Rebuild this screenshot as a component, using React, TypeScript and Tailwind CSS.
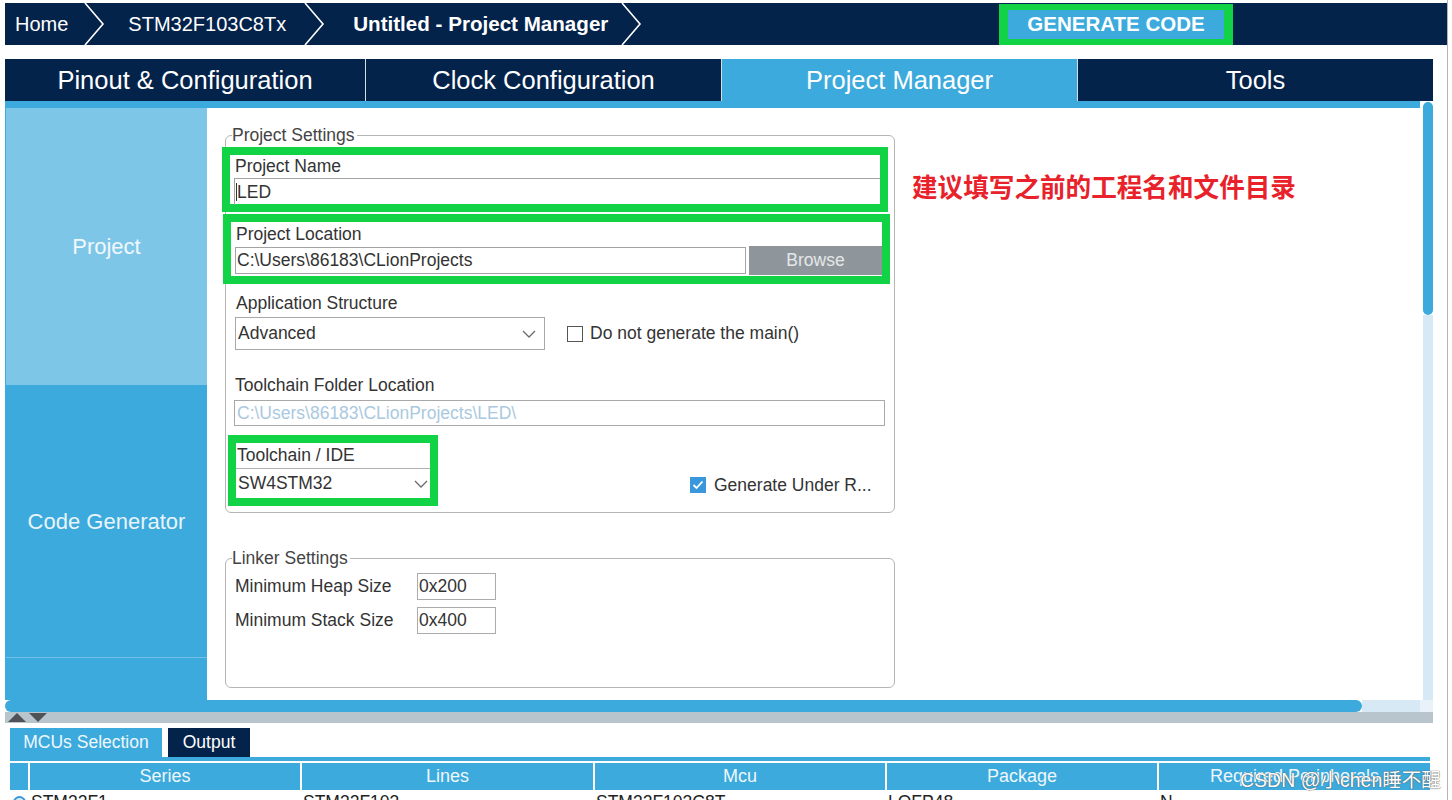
import React from "react";

function Crumb() {
  return (
    <svg width="22" height="42" viewBox="0 0 22 42" className="shrink-0">
      <polyline points="2,0 20,21 2,42" fill="none" stroke="#ffffff" strokeWidth="1.6" />
    </svg>
  );
}

function DownArrow() {
  return (
    <svg width="14" height="8" viewBox="0 0 14 8" className="shrink-0">
      <polyline points="1,1 7,7 13,1" fill="none" stroke="#6b6b6b" strokeWidth="1.3" />
    </svg>
  );
}

function CheckBox({ checked }: { checked?: boolean }) {
  if (checked) {
    return (
      <div className="w-[16px] h-[16px] bg-[#3a97db] flex items-center justify-center shrink-0">
        <svg width="12" height="10" viewBox="0 0 12 10">
          <polyline points="1.5,5 4.5,8 10.5,1.5" fill="none" stroke="#ffffff" strokeWidth="1.8" />
        </svg>
      </div>
    );
  }
  return <div className="w-[16px] h-[16px] border-[1.5px] border-[#555] bg-white shrink-0" />;
}

const tabs = [
  { name: "Pinout & Configuration", w: "w-[360px]", active: false },
  { name: "Clock Configuration", w: "w-[356px] border-l border-[#d5dde6]", active: false },
  { name: "Project Manager", w: "w-[356px] border-l border-[#d5dde6]", active: true },
  { name: "Tools", w: "w-[356px] border-l border-[#d5dde6]", active: false },
];

const columns = [
  { name: "", w: "w-[18px]", val: "" },
  { name: "Series", w: "w-[270px]", val: "STM32F1" },
  { name: "Lines", w: "w-[291px]", val: "STM32F103" },
  { name: "Mcu", w: "w-[290px]", val: "STM32F103C8T" },
  { name: "Package", w: "w-[270px]", val: "LQFP48" },
  { name: "Required Peripherals", w: "w-[271px]", val: "N" },
];

export default function App() {
  return (
    <div className="relative w-[1452px] h-[800px] overflow-hidden bg-white font-['Liberation_Sans','Noto_Sans_CJK_SC',Arial,sans-serif] text-[#333]">
      <div className="w-[1448px] h-full border-r border-[#b4b4b4] flex flex-col">
        {/* breadcrumb bar */}
        <div className="mt-[3px] ml-[5px] w-[1442px] h-[42px] bg-[#04234b] flex items-center text-white text-[20px] shrink-0">
          <span className="pl-[10px]">Home</span>
          <span className="ml-[15px]"><Crumb /></span>
          <span className="ml-[23px]">STM32F103C8Tx</span>
          <span className="ml-[17px]"><Crumb /></span>
          <span className="ml-[28px] font-bold text-[20.6px]">Untitled - Project Manager</span>
          <span className="ml-[12px]"><Crumb /></span>
          <div className="ml-auto mr-[214px] h-[41px] w-[234px] border-x-[9px] border-y-[6px] border-[#12d345] bg-[#3caadc] flex items-center justify-center font-bold text-[20.5px] text-white">
            GENERATE CODE
          </div>
        </div>

        {/* main tabs */}
        <div className="mt-[14px] ml-[5px] w-[1428px] h-[42px] flex shrink-0">
          {tabs.map((t) => (
            <div
              key={t.name}
              className={`${t.w} h-full flex items-center justify-center text-[25.5px] text-white ${t.active ? "bg-[#3caadc]" : "bg-[#04234b]"}`}
            >
              {t.name}
            </div>
          ))}
        </div>

        {/* body */}
        <div className="ml-[5px] w-[1428px] h-[599px] flex shrink-0">
          <div className="w-[1415px] flex flex-col">
            <div className="h-[7px] bg-[#3caadc]" />
            <div className="flex-1 flex">
              <div className="w-[202px] flex flex-col bg-[#3caadc] border-l border-[#3caadc]">
                <div className="h-[277px] bg-[#7ec6e8] flex items-center justify-center text-[22px] text-[#f0f8fc]">
                  Project
                </div>
                <div className="h-[272px] flex items-center justify-center text-[22px] text-[#e8f4fb]">
                  Code Generator
                </div>
                <div className="flex-1 border-t border-[#72c2e8]" />
              </div>

              <div className="flex-1 bg-white pl-[18px] pt-[17px] flex items-start">
                <div className="w-[670px] flex flex-col text-[17.5px]">
                  <fieldset className="border border-[#b5b5b5] rounded-[6px] w-[670px] pb-[6px]">
                    <legend className="ml-[6px] pr-[2px] leading-[20px] text-[#444]">Project Settings</legend>

                    <div className="mt-[2px] -ml-[4px] w-[666px] h-[65px] border-[8px] border-[#12d345] flex flex-col">
                      <div className="h-[23px] leading-[23px] pl-[5px]">Project Name</div>
                      <div className="ml-[4px] flex-1 border-l border-t border-[#a3a3a3] pl-[1px] flex items-center">
                        <span className="w-px h-[18px] bg-[#333]" />
                        <span>LED</span>
                      </div>
                    </div>

                    <div className="mt-[2px] -ml-[3px] w-[667px] h-[70px] border-[8px] border-[#12d345] flex flex-col">
                      <div className="h-[24px] leading-[24px] pl-[5px]">Project Location</div>
                      <div className="flex-1 flex items-start">
                        <div className="ml-[4px] mt-[1px] w-[511px] h-[27px] border border-[#a3a3a3] flex items-center pl-[1px]">
                          C:\Users\86183\CLionProjects
                        </div>
                        <div className="ml-[3px] flex-1 h-[29px] bg-[#8f969b] flex items-center justify-center text-[#e4e7e9]">
                          Browse
                        </div>
                      </div>
                    </div>

                    <div className="mt-[9px] ml-[10px] leading-[20px]">Application Structure</div>
                    <div className="mt-[4px] ml-[9px] flex items-center">
                      <div className="w-[310px] h-[33px] border-[1.5px] border-[#a8a8a8] flex items-center justify-between pl-[2px] pr-[8px]">
                        <span>Advanced</span>
                        <DownArrow />
                      </div>
                      <div className="ml-[22px] flex items-center gap-[7px]">
                        <CheckBox />
                        <span>Do not generate the main()</span>
                      </div>
                    </div>

                    <div className="mt-[25px] ml-[9px] leading-[20px]">Toolchain Folder Location</div>
                    <div className="mt-[5px] ml-[8px] w-[651px] h-[26px] border border-[#a8a8a8] flex items-center pl-[2px] text-[#aac9e0]">
                      C:\Users\86183\CLionProjects\LED\
                    </div>

                    <div className="mt-[9px] ml-[2px] flex">
                      <div className="w-[210px] h-[71px] border-[8px] border-[#12d345] flex flex-col">
                        <div className="h-[25px] leading-[25px] pl-[1px]">Toolchain / IDE</div>
                        <div className="flex-1 border-t border-[#b0b0b0] flex items-center justify-between pl-[2px] pr-[2px]">
                          <span>SW4STM32</span>
                          <DownArrow />
                        </div>
                      </div>
                      <div className="ml-[252px] self-end mb-[11px] h-[20px] flex items-center gap-[8px]">
                        <CheckBox checked />
                        <span>Generate Under R...</span>
                      </div>
                    </div>
                  </fieldset>

                  <fieldset className="mt-[35px] border border-[#b5b5b5] rounded-[6px] w-[670px] pb-[53px]">
                    <legend className="ml-[6px] pr-[2px] leading-[20px] text-[#444]">Linker Settings</legend>
                    <div className="mt-[5px] ml-[9px] flex items-center">
                      <span className="w-[182px]">Minimum Heap Size</span>
                      <div className="w-[79px] h-[27px] border border-[#ababab] flex items-center pl-[1px]">0x200</div>
                    </div>
                    <div className="mt-[7px] ml-[9px] flex items-center">
                      <span className="w-[182px]">Minimum Stack Size</span>
                      <div className="w-[79px] h-[27px] border border-[#ababab] flex items-center pl-[1px]">0x400</div>
                    </div>
                  </fieldset>
                </div>

                <div className="ml-[17px] mt-[45px] text-[25.6px] leading-[32px] font-bold text-[#e8212b] font-['Noto_Sans_CJK_SC',sans-serif]">
                  建议填写之前的工程名和文件目录
                </div>
              </div>
            </div>
          </div>

          {/* vertical scrollbar */}
          <div className="w-[13px] flex flex-col bg-white">
            <div className="ml-[3px] mt-[1px] w-[10px] h-[213px] rounded-full bg-[#3caadc]" />
            <div className="ml-[3px] w-[10px] flex-1 bg-[#d8e9f6]" />
          </div>
        </div>

        {/* horizontal scrollbar */}
        <div className="ml-[5px] w-[1428px] h-[12px] flex shrink-0">
          <div className="w-[1357px] h-full rounded-full bg-[#3caadc]" />
          <div className="w-[58px] h-full bg-[#d8e9f6]" />
          <div className="w-[13px] h-full bg-[#e9f2f9]" />
        </div>

        {/* splitter */}
        <div className="ml-[5px] w-[1428px] h-[11px] bg-[#b9c5cc] flex items-center pl-[3px] gap-[3px] shrink-0">
          <svg width="18" height="9" viewBox="0 0 18 9">
            <polygon points="0,9 9,0 18,9" fill="#4f5357" />
          </svg>
          <svg width="18" height="9" viewBox="0 0 18 9">
            <polygon points="0,0 18,0 9,9" fill="#4f5357" />
          </svg>
        </div>

        {/* bottom tabs */}
        <div className="mt-[5px] ml-[10px] flex h-[29px] shrink-0 text-[17.5px]">
          <div className="w-[152px] h-full bg-[#3caadc] flex items-center justify-center text-[#eef7fc]">MCUs Selection</div>
          <div className="ml-[6px] w-[82px] h-full bg-[#04234b] flex items-center justify-center text-white">Output</div>
        </div>
        <div className="ml-[10px] w-[1420px] h-[4px] bg-[#3caadc] shrink-0" />

        <div className="mt-[2px] ml-[10px] w-[1420px] h-[27px] flex gap-[2px] shrink-0 text-[18px]">
          {columns.map((c, i) => (
            <div key={i} className={`${c.w} h-full bg-[#3caadc] flex items-center justify-center text-[#eef7fc]`}>
              {c.name}
            </div>
          ))}
        </div>
        <div className="ml-[10px] w-[1420px] h-[24px] flex gap-[2px] shrink-0 text-[17.5px] text-[#222]">
          {columns.map((c, i) => (
            <div key={i} className={`${c.w} h-full flex items-center pl-[1px]`}>
              {i === 0 ? <span className="ml-[2px] w-[13px] h-[13px] rounded-full border-2 border-[#3a97db] bg-[#d8ecf8]" /> : c.val}
            </div>
          ))}
        </div>
      </div>

      <div className="absolute left-[1240px] top-[766px] text-[19.5px] text-white [text-shadow:0_0_1px_#555,0_0_1px_#555]">
        CSDN @小chen睡不醒
      </div>
    </div>
  );
}
